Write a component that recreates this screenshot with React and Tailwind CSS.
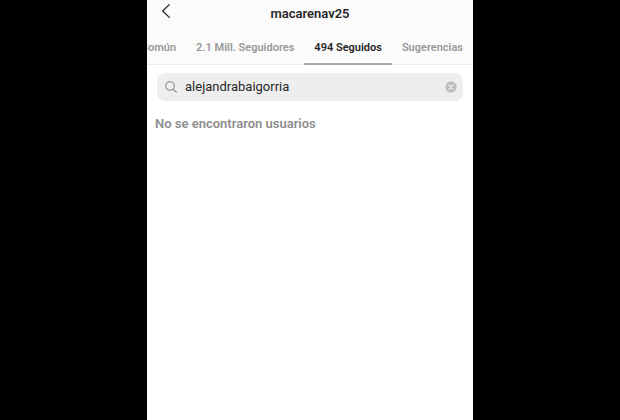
import React, { useState } from 'react';

const tabs = [
  { id: 'mutual', label: 'Común' },
  { id: 'followers', label: '2.1 Mill. Seguidores' },
  { id: 'following', label: '494 Seguidos' },
  { id: 'suggested', label: 'Sugerencias' },
];

const BackIcon = () => (
  <svg width="10" height="16" viewBox="0 0 10 16" fill="none" stroke="#262626" strokeWidth="1.3" strokeLinecap="round" strokeLinejoin="round">
    <path d="M8.3 1.6 1.7 8l6.6 6.4" />
  </svg>
);

const SearchIcon = () => (
  <svg width="12" height="12" viewBox="0 0 12 12" fill="none" stroke="#8a8a8e" strokeWidth="1.1" strokeLinecap="round">
    <circle cx="5" cy="5" r="4.3" />
    <path d="m8.2 8.2 3.2 3.2" />
  </svg>
);

const ClearIcon = () => (
  <svg width="12" height="12" viewBox="0 0 12 12">
    <circle cx="6" cy="6" r="5.6" fill="#bcbcbc" />
    <path d="m4 4 4 4M8 4 4 8" stroke="#f2f2f2" strokeWidth="1.2" strokeLinecap="round" />
  </svg>
);

const App = () => {
  const [active, setActive] = useState('following');
  const [query, setQuery] = useState('alejandrabaigorria');

  return (
    <div className="min-h-screen bg-black flex justify-center font-['Roboto',sans-serif]">
      <main className="w-full max-w-[326px] bg-white overflow-hidden">
        <header className="bg-[#fbfbfb] border-b border-[#ececec]">
          <div className="grid grid-cols-[32px_1fr_32px] items-start h-6 px-3">
            <button type="button" aria-label="Atrás" className="flex items-center pl-0.5 pb-0.5 h-6">
              <BackIcon />
            </button>
            <h1 className="pt-0.5 text-center text-[13px] leading-6 font-semibold text-[#262626]">macarenav25</h1>
          </div>
          <nav className="flex justify-end pt-3 -mb-px overflow-hidden">
            {tabs.map(tab => (
              <button
                key={tab.id}
                type="button"
                onClick={() => setActive(tab.id)}
                className={`shrink-0 px-2.5 pt-1 pb-[7px] text-[11px] leading-4 font-semibold whitespace-nowrap border-b-2 ${
                  active === tab.id ? 'text-[#262626] border-[#aaaaaa]' : 'text-[#999999] border-transparent'
                }`}
              >
                {tab.label}
              </button>
            ))}
          </nav>
        </header>

        <div className="flex items-center h-7 mt-2 mx-2.5 pl-2 pr-1.5 gap-2 rounded-lg bg-[#eeeeee]">
          <label htmlFor="user-search" aria-label="Buscar">
            <SearchIcon />
          </label>
          <input
            id="user-search"
            type="text"
            value={query}
            onChange={e => setQuery(e.target.value)}
            className="flex-1 min-w-0 bg-transparent text-[13px] leading-5 text-[#262626] outline-none"
          />
          <button type="button" aria-label="Borrar" onClick={() => setQuery('')}>
            <ClearIcon />
          </button>
        </div>

        <p className="px-2 mt-[13px] text-[13px] leading-5 font-semibold text-[#8e8e8e]">No se encontraron usuarios</p>
      </main>
    </div>
  );
};

export default App;
